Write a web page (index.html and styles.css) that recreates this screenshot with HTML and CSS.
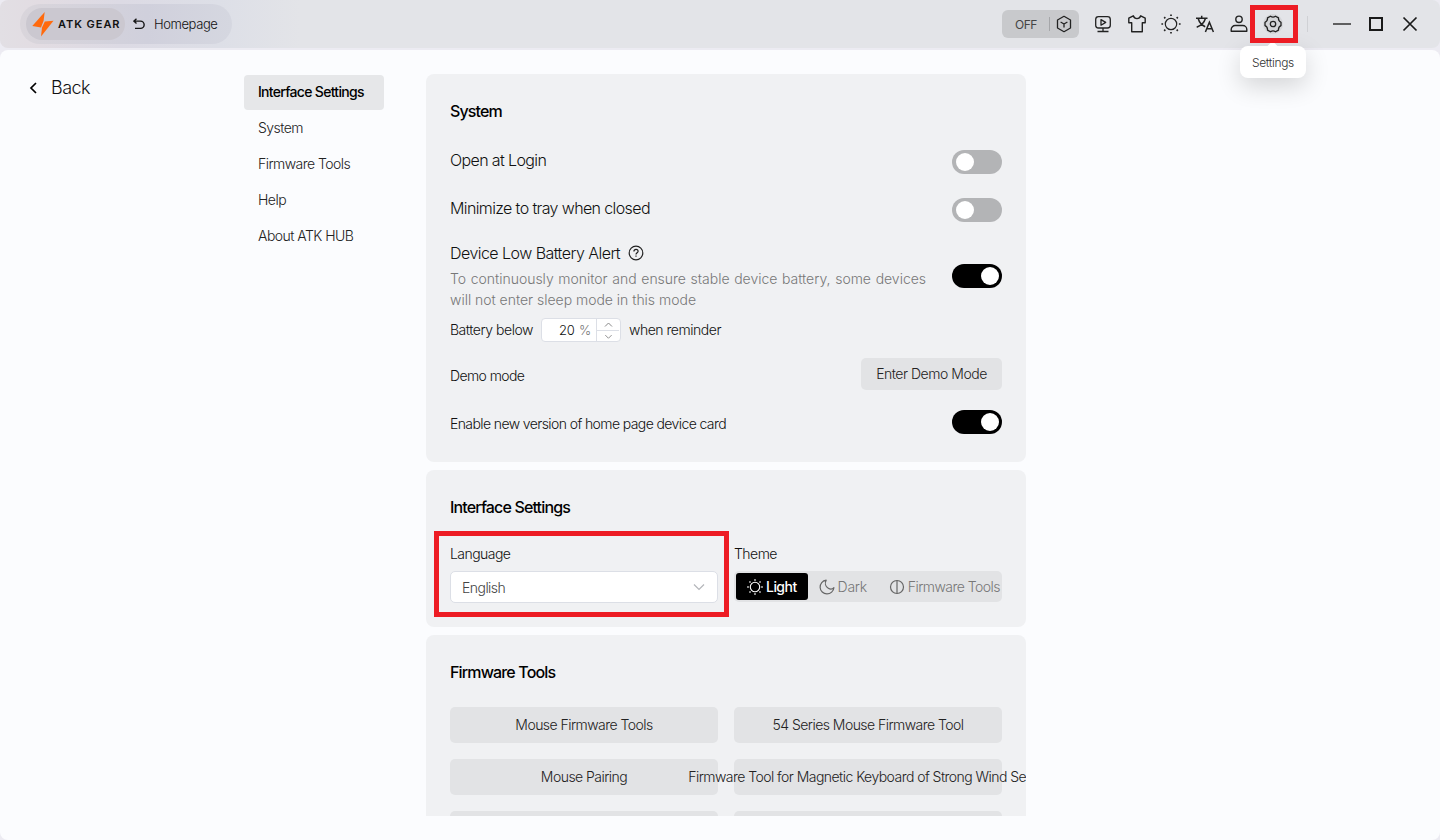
FILE: index.html
```html
<!DOCTYPE html>
<html lang="en">
<head>
  <meta charset="UTF-8">
  <meta name="viewport" content="width=device-width, initial-scale=1.0">
  <title>ATK HUB - Settings</title>
  <link rel="stylesheet" href="styles.css">
</head>
<body>

<header class="topbar">
  <div class="nav-pill">
    <div class="brand">
      <svg class="brand-mark" width="22" height="25" viewBox="0 0 22 25" fill="#ff6a0d">
        <path d="M12.700 0 .3 14l8.700 1.500 2.600-6.700z"/>
        <path d="M21.500 8.800 12.800 9.600 10 15.600 9 24.500z"/>
      </svg>
      <span class="brand-name">ATK GEAR</span>
    </div>
    <a class="home-link">
      <svg width="12" height="12" viewBox="0 0 12 12" fill="none" stroke="#151515" stroke-width="1.400">
        <path d="M3.500.800.900 3.100l2.600 2.300M1 3.100h6.500a3.600 3.600 0 0 1 0 7.300H2"/>
      </svg>
      <span>Homepage</span>
    </a>
  </div>

  <div class="tools">
    <div class="mode-switch">
      <span class="mode-text">OFF</span>
      <span class="mode-line"></span>
      <svg width="16" height="18" viewBox="0 0 16 18" fill="none" stroke="#222" stroke-width="1.300" stroke-linejoin="round">
        <path d="M8 1.300 14.500 5v8L8 16.700 1.500 13V5z"/>
        <path d="M4.600 7 8 9l3.400-2M8 9v3.500"/>
      </svg>
    </div>
    <div class="tool-icons">
      <svg width="20" height="20" viewBox="0 0 20 20" fill="none" stroke="#222" stroke-width="1.300" stroke-linejoin="round">
        <rect x="2.700" y="2.700" width="14.600" height="11.300" rx="2.800"/>
        <path d="M8 5.600v5.600l4.700-2.800zM10 14v3.300M4.500 17.500h11"/>
      </svg>
      <svg width="20" height="20" viewBox="0 0 20 20" fill="none" stroke="#222" stroke-width="1.400" stroke-linejoin="round">
        <path d="M6.300 1.800 1.800 4.200v4.600h2.900v9h10.600v-9h2.900V4.200l-4.500-2.400c-.6 1.800-1.800 2.800-3.700 2.800s-3.100-1-3.700-2.800z"/>
      </svg>
      <svg width="20" height="20" viewBox="0 0 20 20" fill="none" stroke="#222" stroke-width="1.200">
        <circle cx="10" cy="10" r="5.700"/>
        <path stroke-width="1.700" d="M10 .4v1.700M10 17.900v1.700M.4 10h1.700M17.900 10h1.700M3.200 3.200l1.100 1.100M15.700 15.700l1.100 1.100M3.200 16.800l1.100-1.100M15.700 4.300l1.100-1.100"/>
      </svg>
      <svg width="20" height="20" viewBox="0 0 20 20" fill="none" stroke="#222" stroke-width="1.500">
        <path d="M1 4.200h11.500M6.700 1.800v2.400M3.200 4.500c1 3.700 3.500 6.600 7 8.200M10.400 4.500C9.300 8.400 6.500 11.500 1.700 13.200M10.400 18l4-9.800 4 9.800M11.800 14.800h5.300"/>
      </svg>
      <svg width="20" height="20" viewBox="0 0 20 20" fill="none" stroke="#222" stroke-width="1.400">
        <circle cx="10" cy="5.300" r="3.200"/>
        <path stroke-linejoin="round" d="M2.200 17.300v-1.800a4 4 0 0 1 4-4h7.600a4 4 0 0 1 4 4v1.800z"/>
      </svg>
      <div class="settings-tool">
        <svg width="20" height="20" viewBox="0 0 20 20" fill="none" stroke="#222" stroke-width="1.300" stroke-linejoin="round">
          <path d="M7.500 2.200Q10 4 12.500 2.200L15.500 3.900Q15.200 7 18 8.300V11.700Q15.200 13 15.500 16.100L12.500 17.800Q10 16 7.500 17.800L4.500 16.100Q4.800 13 2 11.700V8.300Q4.800 7 4.500 3.900z"/>
          <circle cx="10" cy="10" r="2.700"/>
        </svg>
        <div class="tooltip">Settings</div>
        <div class="mark mark-settings"></div>
      </div>
    </div>
    <span class="tools-line"></span>
    <div class="window-buttons">
      <svg width="20" height="20" viewBox="0 0 20 20" stroke="#333" stroke-width="1.500"><path d="M1 10h18"/></svg>
      <svg width="20" height="20" viewBox="0 0 20 20" fill="none" stroke="#1a1a1a" stroke-width="2"><rect x="4" y="4" width="12" height="12"/></svg>
      <svg width="20" height="20" viewBox="0 0 20 20" stroke="#1a1a1a" stroke-width="1.700"><path d="m3.500 3.500 13 13M16.500 3.500l-13 13"/></svg>
    </div>
  </div>
</header>

<main class="page">
  <a class="back">
    <svg width="10" height="12" viewBox="0 0 10 12" fill="none" stroke="#000" stroke-width="1.700"><path d="M7 1 2 6l5 5"/></svg>
    <span>Back</span>
  </a>

  <nav class="side-nav">
    <a class="active">Interface Settings</a>
    <a>System</a>
    <a>Firmware Tools</a>
    <a>Help</a>
    <a>About ATK HUB</a>
  </nav>

  <div class="content">
    <section class="card system">
      <h2>System</h2>
      <div class="row">
        <span class="large">Open at Login</span>
        <span class="toggle"></span>
      </div>
      <div class="row">
        <span class="large">Minimize to tray when closed</span>
        <span class="toggle"></span>
      </div>
      <div class="row battery">
        <div class="battery-info">
          <div class="battery-title">
            <span>Device Low Battery Alert</span>
            <svg width="16" height="16" viewBox="0 0 16 16" fill="none" stroke="#222" stroke-width="1.200">
              <circle cx="8" cy="8" r="6.800"/>
              <path d="M5.900 6.400C5.900 5 6.800 4.300 8 4.300s2.100.8 2.100 1.900c0 1.400-2.100 1.600-2.100 3.200M8 10.500v1.300"/>
            </svg>
          </div>
          <p class="battery-desc">To continuously monitor and ensure stable device battery, some devices will not enter sleep mode in this mode</p>
        </div>
        <span class="toggle on"></span>
      </div>
      <div class="reminder">
        <span class="reminder-text">Battery below</span>
        <div class="stepper">
          <span class="stepper-value">20 <i>%</i></span>
          <span class="stepper-buttons">
            <svg width="22" height="11" viewBox="0 0 22 11" fill="none" stroke="#888"><path d="M8 7.500 11.500 4 15 7.500"/></svg>
            <svg width="22" height="11" viewBox="0 0 22 11" fill="none" stroke="#888"><path d="M8 4.500 11.500 8 15 4.500"/></svg>
          </span>
        </div>
        <span class="reminder-text">when reminder</span>
      </div>
      <div class="row demo">
        <span class="row-text">Demo mode</span>
        <button class="demo-button">Enter Demo Mode</button>
      </div>
      <div class="row">
        <span class="row-text">Enable new version of home page device card</span>
        <span class="toggle on"></span>
      </div>
    </section>

    <section class="card interface">
      <h2>Interface Settings</h2>
      <div class="columns">
        <div class="field">
          <span class="field-label">Language</span>
          <div class="select">
            <span>English</span>
            <svg width="12" height="8" viewBox="0 0 12 8" fill="none" stroke="#b4b6ba" stroke-width="1.200"><path d="m1 1.500 5 5 5-5"/></svg>
          </div>
          <div class="mark mark-language"></div>
        </div>
        <div class="field">
          <span class="field-label">Theme</span>
          <div class="themes">
            <span class="theme selected">
              <svg width="16" height="16" viewBox="0 0 16 16" fill="none" stroke="#fff" stroke-width="1.100">
                <circle cx="8" cy="8" r="4.700"/>
                <path stroke-width="1.400" d="M8 .3v1.400M8 14.300v1.400M.3 8h1.400M14.300 8h1.400M2.500 2.500l1 1M12.500 12.500l1 1M2.500 13.500l1-1M12.500 3.500l1-1"/>
              </svg>
              Light
            </span>
            <span class="theme dark">
              <svg width="16" height="16" viewBox="0 0 16 16" fill="none" stroke="#666" stroke-width="1.200" stroke-linejoin="round">
                <path d="M7.200 1.200a6.900 6.900 0 1 0 7.700 7.400c-1.200 1.300-3.600 1.900-5.600.6C6.300 7.400 5.600 4 7.200 1.200z"/>
              </svg>
              Dark
            </span>
            <span class="theme">
              <svg width="16" height="16" viewBox="0 0 16 16" fill="none" stroke="#666" stroke-width="1.200">
                <circle cx="8" cy="8" r="6.500"/><path d="M8 1.500v13"/>
              </svg>
              Firmware Tools
            </span>
          </div>
        </div>
      </div>
    </section>

    <section class="card firmware">
      <h2>Firmware Tools</h2>
      <div class="tool-grid">
        <button>Mouse Firmware Tools</button>
        <button>54 Series Mouse Firmware Tool</button>
        <button>Mouse Pairing</button>
        <button>Firmware Tool for Magnetic Keyboard of Strong Wind Series</button>
        <button></button>
        <button></button>
      </div>
    </section>
  </div>
</main>

</body>
</html>
```
FILE: styles.css
```css
* {
  box-sizing: border-box;
}
body {
  margin: 0;
  height: 840px;
  overflow: hidden;
  display: flex;
  flex-direction: column;
  gap: 2px;
  background: #ecebf2;
  font-family: Inter, "Liberation Sans", sans-serif;
  font-size: 14px;
  font-weight: 300;
  letter-spacing: -0.54px;
  color: #111;
}
svg {
  display: block;
  flex: none;
}
button {
  border: none;
  border-radius: 5px;
  background: #e2e3e5;
  color: #222;
  font: inherit;
  letter-spacing: inherit;
  padding: 0 0 1px;
  white-space: nowrap;
}

/* top bar */
.topbar {
  height: 48px;
  flex: none;
  display: flex;
  justify-content: space-between;
  align-items: center;
  padding: 0 20px;
  border-radius: 8px;
  background: linear-gradient(90deg, #e2dfe4 0, #e2dce2 40px, #dcdae4 120px, #dddfe7 220px, #e3e4e8 300px);
}
.nav-pill {
  width: 212px;
  height: 40px;
  display: flex;
  align-items: center;
  gap: 8px;
  padding-left: 6px;
  border-radius: 20px;
  background: linear-gradient(90deg, #d9d5db, #d0d0dc 60%, #d5d7e0);
}
.brand {
  width: 99px;
  height: 32px;
  display: flex;
  align-items: center;
  gap: 4px;
  padding-left: 6px;
  border-radius: 16px;
  background: #cbc8d0;
}
.brand-name {
  font-size: 11px;
  font-weight: 600;
  letter-spacing: 0.95px;
  white-space: nowrap;
}
.home-link {
  display: flex;
  align-items: center;
  gap: 9px;
  font-size: 13px;
  letter-spacing: -0.4px;
}
.tools {
  display: flex;
  align-items: center;
}
.mode-switch {
  width: 77px;
  height: 28px;
  display: flex;
  align-items: center;
  padding-left: 13px;
  border-radius: 6px;
  background: #c8c9cc;
}
.mode-text {
  width: 34px;
  font-size: 12px;
  font-weight: 400;
  letter-spacing: -0.5px;
  color: #444;
}
.mode-line {
  width: 1px;
  height: 14px;
  margin-right: 6px;
  background: #a5a6a9;
}
.tool-icons {
  display: flex;
  gap: 14px;
  margin-left: 14px;
}
.settings-tool {
  position: relative;
  border-radius: 50%;
  background: #d4d5d8;
}
.tooltip {
  position: absolute;
  z-index: 2;
  top: 32px;
  left: -23px;
  width: 66px;
  height: 32px;
  line-height: 34px;
  text-align: center;
  font-size: 12px;
  letter-spacing: -0.35px;
  color: #333;
  border-radius: 8px;
  background: #fff;
  box-shadow: 0 8px 24px rgba(0, 0, 0, 0.16);
}
.tooltip::before {
  content: "";
  position: absolute;
  top: -3px;
  left: 28px;
  width: 9px;
  height: 9px;
  border-radius: 2px;
  background: #fff;
  transform: rotate(45deg);
}
.mark {
  position: absolute;
  border: 5px solid #ed1c24;
}
.mark-settings {
  z-index: 3;
  top: -9px;
  left: -13px;
  width: 48px;
  height: 38px;
}
.mark-language {
  top: -14px;
  left: -16px;
  width: 295px;
  height: 86px;
}
.tools-line {
  width: 1px;
  height: 16px;
  margin: 0 24px;
  background: #d0d1d5;
}
.window-buttons {
  display: flex;
  gap: 14px;
}

/* page */
.page {
  flex: 1;
  min-height: 0;
  display: flex;
  align-items: flex-start;
  padding: 24px 0;
  border-radius: 8px;
  background: #fbfcfe;
}
.back {
  width: 244px;
  display: flex;
  align-items: center;
  gap: 12px;
  padding: 3px 0 0 29px;
  font-size: 18px;
  line-height: 22px;
}
.side-nav {
  width: 140px;
  margin: 1px 42px 0 0;
  display: flex;
  flex-direction: column;
  gap: 1px;
}
.side-nav a {
  height: 35px;
  line-height: 34px;
  padding-left: 14px;
  border-radius: 4px;
  color: #222;
}
.side-nav .active {
  background: #e6e7e9;
  color: #000;
  font-weight: 500;
  letter-spacing: -0.7px;
}
.content {
  width: 600px;
  height: 742px;
  overflow: hidden;
  display: flex;
  flex-direction: column;
  gap: 8px;
}
.card {
  flex: none;
  padding: 24px;
  border-radius: 8px;
  background: #f0f1f3;
}
.card h2 {
  margin: 0;
  font-size: 16px;
  font-weight: 500;
  line-height: 26px;
  letter-spacing: -0.85px;
  color: #000;
}
.system {
  height: 388px;
}
.interface {
  height: 157px;
}
.firmware {
  height: 300px;
}

.row {
  height: 48px;
  display: flex;
  align-items: center;
  justify-content: space-between;
}
.row-text {
  padding-top: 2px;
  letter-spacing: -0.6px;
}
.system h2 {
  margin-bottom: 14px;
}
.large {
  font-size: 16px;
  letter-spacing: -0.62px;
  margin-top: -4px;
}
.toggle {
  width: 50px;
  height: 24px;
  flex: none;
  padding: 3px 4px;
  border-radius: 12px;
  background: #b3b4b6;
}
.toggle::before {
  content: "";
  display: block;
  width: 18px;
  height: 18px;
  border-radius: 50%;
  background: #fff;
}
.toggle.on {
  background: #000;
}
.toggle.on::before {
  margin-left: 25px;
}
.battery {
  height: 84px;
}
.battery-info {
  width: 476px;
}
.battery-title {
  display: flex;
  align-items: center;
  gap: 8px;
  height: 24px;
  font-size: 16px;
}
.battery-desc {
  margin: 3px 0 1px;
  line-height: 21px;
  letter-spacing: -0.02px;
  text-align: justify;
  color: #777;
}
.reminder {
  height: 24px;
  display: flex;
  align-items: center;
  gap: 8px;
}
.reminder-text {
  padding-bottom: 2px;
  letter-spacing: -0.47px;
}
.stepper {
  width: 80px;
  height: 24px;
  display: flex;
  border: 1px solid #dcdfe6;
  border-radius: 4px;
  background: #fff;
}
.stepper-value {
  width: 54px;
  padding-right: 5px;
  line-height: 23px;
  text-align: right;
  font-size: 13px;
  letter-spacing: -0.2px;
}
.stepper-value i {
  margin-left: 1px;
  font-style: normal;
  color: #777;
}
.stepper-buttons {
  width: 24px;
  border-left: 1px solid #dcdfe6;
}
.stepper-buttons svg + svg {
  border-top: 1px solid #dcdfe6;
}
.demo {
  margin-top: 8px;
}
.demo-button {
  width: 141px;
  height: 32px;
  letter-spacing: -0.47px;
}

.columns {
  display: grid;
  grid-template-columns: 268px 268px;
  gap: 16px;
  margin-top: 25px;
}
.field {
  position: relative;
}
.field-label {
  display: block;
  line-height: 17px;
  margin-bottom: 9px;
}
.select {
  height: 32px;
  display: flex;
  align-items: center;
  justify-content: space-between;
  padding: 0 12px 0 11px;
  border: 1px solid #dcdfe6;
  border-radius: 5px;
  background: #fff;
  color: #444;
}
.themes {
  height: 31px;
  display: flex;
  align-items: center;
  padding: 2px;
  border-radius: 5px;
  background: #e2e3e5;
}
.theme {
  height: 27px;
  display: flex;
  align-items: center;
  gap: 3px;
  padding: 0 11px;
  border-radius: 3px;
  color: #777;
  white-space: nowrap;
}
.theme.dark {
  width: 71px;
  letter-spacing: -0.3px;
}
.theme.selected {
  width: 72px;
  background: #000;
  color: #fff;
  font-weight: 500;
}
.tool-grid {
  display: grid;
  grid-template-columns: 268px 268px;
  grid-auto-rows: 36px;
  gap: 16px;
  margin-top: 22px;
}
.tool-grid button {
  display: flex;
  align-items: center;
  justify-content: center;
}
```
